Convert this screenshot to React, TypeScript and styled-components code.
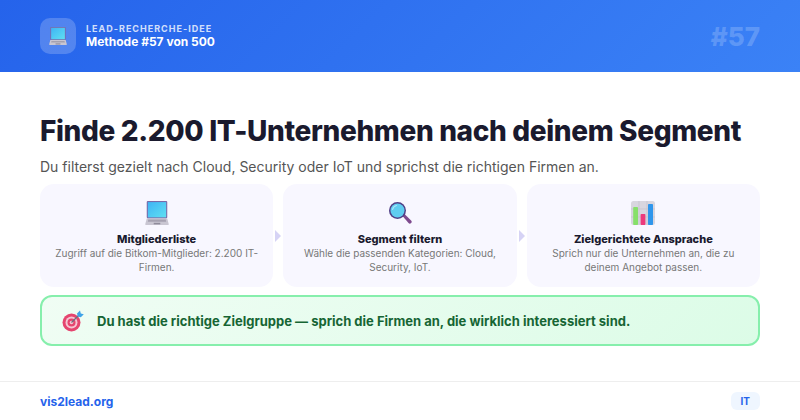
import * as React from 'react';
import styled, { createGlobalStyle } from 'styled-components';

const Global = createGlobalStyle`
  html, body { margin: 0; padding: 0; }
  body { width: 800px; height: 420px; overflow: hidden; background: #fff; font-family: Inter, "Noto Sans", sans-serif; }
  * { box-sizing: border-box; }
`;

const Page = styled.div`
  width: 800px;
  height: 420px;
  display: flex;
  flex-direction: column;
`;
const Header = styled.header`
  height: 72px;
  padding: 0 40px;
  display: flex;
  align-items: center;
  justify-content: space-between;
  background: linear-gradient(135deg, #2563eb, #3b82f6);
`;
const Brand = styled.div`
  display: flex;
  align-items: center;
  gap: 10px;
`;
const IconBox = styled.div`
  width: 36px;
  height: 36px;
  border-radius: 10px;
  background: rgba(255, 255, 255, 0.2);
  display: flex;
  align-items: center;
  justify-content: center;
`;
const Eyebrow = styled.div`
  font-size: 9px;
  font-weight: 700;
  letter-spacing: 1px;
  color: rgba(255, 255, 255, 0.8);
`;
const Method = styled.div`
  font-size: 12px;
  font-weight: 700;
  color: #fff;
`;
const Number = styled.div`
  font-size: 26px;
  font-weight: 800;
  color: rgba(255, 255, 255, 0.2);
`;
const Main = styled.main`
  flex: 1;
  padding: 40px 40px 0;
`;
const Title = styled.h1`
  margin: 0 0 7px;
  font-size: 28px;
  line-height: 38px;
  font-weight: 800;
  letter-spacing: -0.35px;
  color: #1a1a2e;
`;
const Sub = styled.p`
  margin: 0 0 7px;
  font-size: 14px;
  line-height: 20px;
  color: #555;
`;
const Steps = styled.div`
  display: flex;
  align-items: stretch;
  gap: 10px;
`;
const Step = styled.div`
  position: relative;
  flex: 1;
  height: 103px;
  padding: 14px 14px 0;
  border-radius: 14px;
  background: #f8f7ff;
  text-align: center;

  &:not(:last-child)::after {
    content: '';
    position: absolute;
    top: 46px;
    right: -8px;
    border-left: 6px solid #d6d3f5;
    border-top: 6px solid transparent;
    border-bottom: 6px solid transparent;
  }
`;
const StepIcon = styled.div`
  height: 30px;
  margin-bottom: 4px;
  display: flex;
  justify-content: center;
  align-items: center;
`;
const StepTitle = styled.div`
  font-size: 11px;
  line-height: 14px;
  font-weight: 800;
  color: #1a1a2e;
`;
const StepText = styled.div`
  font-size: 10px;
  line-height: 14px;
  color: #777;
`;
const Callout = styled.div`
  margin-top: 8px;
  height: 51px;
  padding: 0 20px;
  display: flex;
  align-items: center;
  gap: 13px;
  border: 2px solid #86efac;
  border-radius: 12px;
  background: linear-gradient(135deg, #f0fdf4, #dcfce7);
  font-size: 13px;
  font-weight: 700;
  color: #166534;
`;
const Footer = styled.footer`
  height: 39px;
  padding: 0 40px;
  display: flex;
  align-items: center;
  justify-content: space-between;
  border-top: 1px solid #eee;
`;
const Site = styled.div`
  font-size: 12px;
  font-weight: 700;
  color: #2563eb;
`;
const Tag = styled.div`
  padding: 3px 10px;
  border-radius: 6px;
  background: #eff6ff;
  font-size: 10px;
  line-height: 12px;
  font-weight: 700;
  color: #2563eb;
`;

const LaptopIcon = ({ size }: { size: number }) => (
  <svg width={size} height={size} viewBox="1 1 22 22">
    <defs>
      <linearGradient id="lap" x1="0" y1="0" x2="1" y2="1">
        <stop offset="0" stopColor="#3fb4f5" />
        <stop offset="1" stopColor="#5fe0f2" />
      </linearGradient>
    </defs>
    <rect x="2.6" y="1" width="18.8" height="16" rx="1" fill="#7a6aa8" />
    <rect x="3.6" y="2" width="16.8" height="14" fill="url(#lap)" />
    <path d="M2.6 17h18.8l1.4 5.2a.7.7 0 0 1-.7.8H1.9a.7.7 0 0 1-.7-.8z" fill="#c9c6d2" />
    <path d="M4 18h16l.4 2H3.6z" fill="#a5a1b0" />
    <rect x="9" y="21" width="6" height="1.4" fill="#8f8b9b" />
  </svg>
);

const SearchIcon = () => (
  <svg width={24} height={24} viewBox="0 0 24 24">
    <path d="M14.5 15l2-2 6.6 6.4a1.8 1.8 0 0 1-2.6 2.6z" fill="#7e4a8e" />
    <circle cx="9.5" cy="9.5" r="8.5" fill="#4f3f86" />
    <circle cx="9.5" cy="9.5" r="7" fill="#5fcdf0" />
    <path d="M4.6 8.5a5 5 0 0 1 4-4" stroke="#a8e6f8" strokeWidth="1.2" fill="none" strokeLinecap="round" />
  </svg>
);

const ChartIcon = () => (
  <svg width={24} height={24} viewBox="0 0 24 24">
    <rect width="24" height="24" rx="2.5" fill="#d8d6df" />
    <path d="M8 0v24M16 0v24M0 8h24M0 16h24" stroke="#c4c1cc" strokeWidth="0.7" />
    <rect x="2.2" y="6" width="4.8" height="18" rx="0.8" fill="#86e06a" />
    <rect x="9.6" y="13" width="4.8" height="11" rx="0.8" fill="#ec3a7c" />
    <rect x="17" y="3" width="5" height="21" rx="0.8" fill="#2f96ec" />
  </svg>
);

const TargetIcon = () => (
  <svg width={22} height={22} viewBox="0 0 22 22">
    <circle cx="9.5" cy="12.5" r="9" fill="#e5456f" />
    <circle cx="9.5" cy="12.5" r="6" fill="#f6c6d3" />
    <circle cx="9.5" cy="12.5" r="4" fill="#e5456f" />
    <circle cx="9.5" cy="12.5" r="1.8" fill="#f6c6d3" />
    <path d="M9.5 12.5L17 5" stroke="#6b6f80" strokeWidth="1.2" />
    <path d="M15 3.5l3-3 .8 3 3 .8-3 3-3-.8z" fill="#3fa3e8" />
  </svg>
);

const steps = [
  { icon: <LaptopIcon size={24} />, title: 'Mitgliederliste', text: 'Zugriff auf die Bitkom-Mitglieder: 2.200 IT-Firmen.' },
  { icon: <SearchIcon />, title: 'Segment filtern', text: 'Wähle die passenden Kategorien: Cloud, Security, IoT.' },
  { icon: <ChartIcon />, title: 'Zielgerichtete Ansprache', text: 'Sprich nur die Unternehmen an, die zu deinem Angebot passen.' },
];

export default function App() {
  return (
    <Page>
      <Global />
      <Header>
        <Brand>
          <IconBox><LaptopIcon size={18} /></IconBox>
          <div>
            <Eyebrow>LEAD-RECHERCHE-IDEE</Eyebrow>
            <Method>Methode #57 von 500</Method>
          </div>
        </Brand>
        <Number>#57</Number>
      </Header>
      <Main>
        <Title>Finde 2.200 IT-Unternehmen nach deinem Segment</Title>
        <Sub>Du filterst gezielt nach Cloud, Security oder IoT und sprichst die richtigen Firmen an.</Sub>
        <Steps>
          {steps.map(s => (
            <Step key={s.title}>
              <StepIcon>{s.icon}</StepIcon>
              <StepTitle>{s.title}</StepTitle>
              <StepText>{s.text}</StepText>
            </Step>
          ))}
        </Steps>
        <Callout>
          <TargetIcon />
          Du hast die richtige Zielgruppe — sprich die Firmen an, die wirklich interessiert sind.
        </Callout>
      </Main>
      <Footer>
        <Site>vis2lead.org</Site>
        <Tag>IT</Tag>
      </Footer>
    </Page>
  );
}
